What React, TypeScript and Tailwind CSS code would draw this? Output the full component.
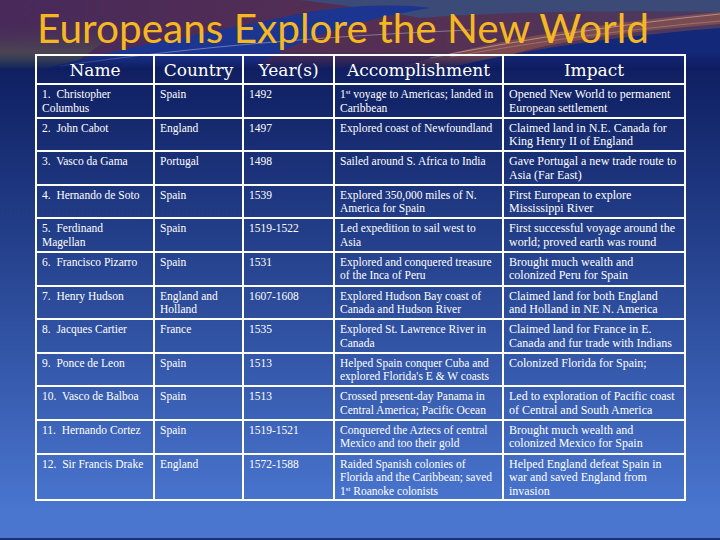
import React from 'react';

type Row = {
  num: string;
  name: string;
  country: string;
  years: string;
  accomplishment: React.ReactNode;
  impact: string;
};

const St = () => <span className="inline-block align-top text-[7px] leading-[9px]">st</span>;

const rows: Row[] = [
  { num: '1.', name: 'Christopher Columbus', country: 'Spain', years: '1492', accomplishment: <>1<St /> voyage to Americas; landed in Caribbean</>, impact: 'Opened New World to permanent European settlement' },
  { num: '2.', name: 'John Cabot', country: 'England', years: '1497', accomplishment: 'Explored coast of Newfoundland', impact: 'Claimed land in N.E. Canada for King Henry II of England' },
  { num: '3.', name: 'Vasco da Gama', country: 'Portugal', years: '1498', accomplishment: 'Sailed around S. Africa to India', impact: 'Gave Portugal a new trade route to Asia (Far East)' },
  { num: '4.', name: 'Hernando de Soto', country: 'Spain', years: '1539', accomplishment: 'Explored 350,000 miles of N. America for Spain', impact: 'First European to explore Mississippi River' },
  { num: '5.', name: 'Ferdinand Magellan', country: 'Spain', years: '1519-1522', accomplishment: 'Led expedition to sail west to Asia', impact: 'First successful voyage around the world; proved earth was round' },
  { num: '6.', name: 'Francisco Pizarro', country: 'Spain', years: '1531', accomplishment: 'Explored and conquered treasure of the Inca of Peru', impact: 'Brought much wealth and colonized Peru for Spain' },
  { num: '7.', name: 'Henry Hudson', country: 'England and Holland', years: '1607-1608', accomplishment: 'Explored Hudson Bay coast of Canada and Hudson River', impact: 'Claimed land for both England and\u00a0Holland in NE N. America' },
  { num: '8.', name: 'Jacques Cartier', country: 'France', years: '1535', accomplishment: 'Explored St. Lawrence River in Canada', impact: 'Claimed land for France in E. Canada and fur trade with Indians' },
  { num: '9.', name: 'Ponce de Leon', country: 'Spain', years: '1513', accomplishment: "Helped Spain conquer Cuba and explored Florida's E & W coasts", impact: 'Colonized Florida for Spain;' },
  { num: '10.', name: 'Vasco de Balboa', country: 'Spain', years: '1513', accomplishment: 'Crossed present-day Panama in Central America; Pacific Ocean', impact: 'Led to exploration of  Pacific coast of Central and South America' },
  { num: '11.', name: 'Hernando Cortez', country: 'Spain', years: '1519-1521', accomplishment: 'Conquered the Aztecs of central Mexico and too their gold', impact: 'Brought much wealth and colonized Mexico for Spain' },
  { num: '12.', name: 'Sir Francis Drake', country: 'England', years: '1572-1588', accomplishment: <>Raided Spanish colonies of Florida and the Caribbean; saved 1<St /> Roanoke colonists</>, impact: 'Helped England defeat Spain in war and saved England from invasion' },
];

const headers = ['Name', 'Country', 'Year(s)', 'Accomplishment', 'Impact'];

// swooshes behind the title
const TitleBand = () => (
  <svg className="absolute left-0 top-0" width="720" height="70" viewBox="0 0 720 70">
    <defs>
      <linearGradient id="band" x1="0" y1="0" x2="1" y2="0">
        <stop offset="0" stopColor="#48295a" />
        <stop offset="0.6" stopColor="#563052" />
        <stop offset="1" stopColor="#4a3a62" />
      </linearGradient>
      <linearGradient id="green" x1="0" y1="0" x2="0" y2="1">
        <stop offset="0" stopColor="#48295a" stopOpacity="0" />
        <stop offset="1" stopColor="#50694a" />
      </linearGradient>
      <linearGradient id="fade" x1="0" y1="0" x2="0" y2="1">
        <stop offset="0" stopColor="#0e1c5e" stopOpacity="0" />
        <stop offset="1" stopColor="#0e1c5e" stopOpacity="1" />
      </linearGradient>
    </defs>
    <rect width="720" height="70" fill="url(#band)" />
    <path d="M0,18 L130,18 C110,40 85,55 65,70 L0,70 Z" fill="url(#green)" />
    <path d="M300,0 L720,0 L720,12 C610,10 500,12 420,18 C380,10 340,5 300,0 Z" fill="#3b4a76" />
    <path d="M40,70 C110,50 210,32 300,14 C340,6 390,3 430,8 C380,16 300,34 250,70 Z" fill="#1c3590" />
    <path d="M390,70 C480,42 590,24 720,12 L720,24 C600,34 510,48 470,70 Z" fill="#9a5848" opacity="0.6" />
    <path d="M440,70 C530,48 620,36 720,28 L720,70 Z" fill="#14287a" />
    <path d="M60,66 C200,46 330,36 470,30" stroke="#c8d0e8" strokeWidth="0.8" fill="none" opacity="0.55" />
    <path d="M430,58 C520,40 620,24 720,14" stroke="#e8d8d0" strokeWidth="0.8" fill="none" opacity="0.6" />
    <path d="M450,57 C540,41 630,29 720,21" stroke="#e8d8d0" strokeWidth="0.6" fill="none" opacity="0.45" />
    <rect y="52" width="720" height="18" fill="url(#fade)" />
  </svg>
);

const cell = 'border-2 border-white align-top pl-[5px] pt-[3px] text-[11.5px] leading-[13.5px]';

const App: React.FC = () => {
  return (
    <div className="relative w-[720px] h-[540px] overflow-hidden bg-linear-to-b from-[#0e1c5e] from-10% to-[#4a76d0] to-95% border-b-2 border-[#1b2f72]">
      <TitleBand />
      <div className="relative flex flex-col">
        <h1
          className="h-[54px] pl-[37px] pt-[4px] text-[40.5px] leading-[48px] text-[#f5b820] whitespace-nowrap"
          style={{ fontFamily: 'Lato, "Open Sans", sans-serif' }}
        >
          Europeans Explore the New World
        </h1>
        <div className="pl-[35px]">
          <table
            className="table-fixed border-collapse border-2 border-white text-white"
            style={{ fontFamily: '"Liberation Serif", serif' }}
          >
            <colgroup>
              <col className="w-[118px]" />
              <col className="w-[89px]" />
              <col className="w-[91px]" />
              <col className="w-[169px]" />
              <col className="w-[182px]" />
            </colgroup>
            <thead>
              <tr className="h-[29px]">
                {headers.map(h => (
                  <th
                    key={h}
                    className="border-2 border-white font-normal text-[17px] leading-[18px] text-center align-middle"
                    style={{ fontFamily: '"DejaVu Serif", serif' }}
                  >
                    {h}
                  </th>
                ))}
              </tr>
            </thead>
            <tbody>
              {rows.map((r, i) => (
                <tr key={r.num} className={i === rows.length - 1 ? 'h-[46px]' : 'h-[33.6px]'}>
                  <td className={`${cell} pr-[5px]`}>{`${r.num}\u00a0 ${r.name}`}</td>
                  <td className={`${cell} pr-[5px]`}>{r.country}</td>
                  <td className={`${cell} pr-[5px]`}>{r.years}</td>
                  <td className={`${cell} pr-[5px]`}>{r.accomplishment}</td>
                  <td className={`${cell} pr-[4px] text-[12px]`}>{r.impact}</td>
                </tr>
              ))}
            </tbody>
          </table>
        </div>
      </div>
    </div>
  );
};

export default App;
